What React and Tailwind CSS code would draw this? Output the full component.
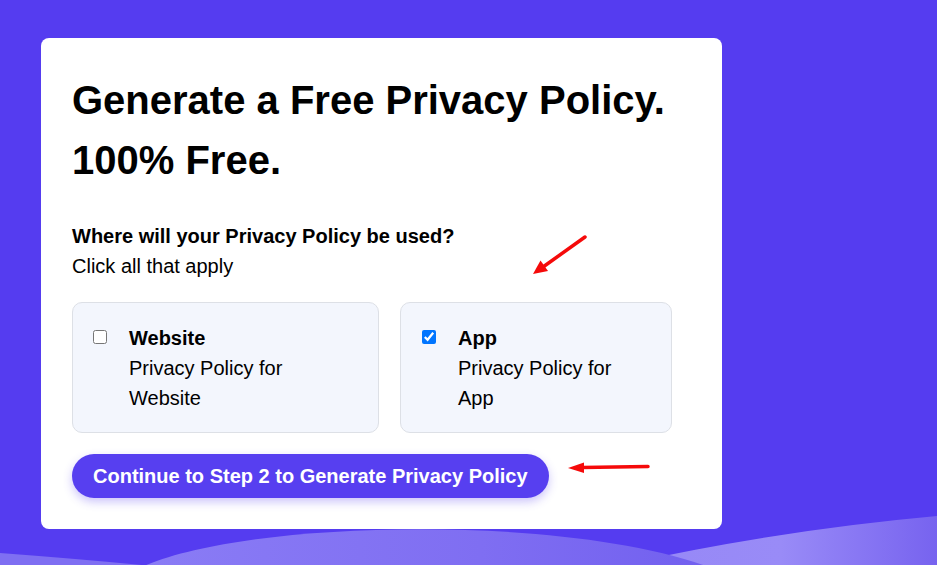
import React from "react";

function Waves() {
  return (
    <svg
      className="absolute left-0 top-0 pointer-events-none"
      width="937"
      height="565"
      viewBox="0 0 937 565"
    >
      <defs>
        <linearGradient id="rw" x1="0" y1="0" x2="1" y2="0">
          <stop offset="0%" stopColor="#9587f6" />
          <stop offset="55%" stopColor="#998bf7" />
          <stop offset="100%" stopColor="#7763ef" />
        </linearGradient>
        <linearGradient id="hump" x1="0" y1="0" x2="1" y2="0">
          <stop offset="0%" stopColor="#8a7cf5" />
          <stop offset="60%" stopColor="#7f6ef2" />
          <stop offset="100%" stopColor="#7260ef" />
        </linearGradient>
      </defs>
      <path d="M0,553 Q80,559 152,566 L0,566 Z" fill="#7f6ff2" />
      <path d="M590,572 Q760,532 937,516 L937,566 L590,566 Z" fill="url(#rw)" />
      <path d="M144,566 C250,520 560,514 706,566 Z" fill="url(#hump)" />
    </svg>
  );
}

function Arrows() {
  return (
    <svg
      className="absolute left-0 top-0 pointer-events-none"
      width="937"
      height="565"
      viewBox="0 0 937 565"
    >
      <line x1="585" y1="237" x2="543" y2="267" stroke="#f50a0a" strokeWidth="3.5" strokeLinecap="round" />
      <polygon points="533,274 540.5,260.5 548,271" fill="#f50a0a" />
      <line x1="648" y1="466.5" x2="582" y2="467.5" stroke="#f50a0a" strokeWidth="3.5" strokeLinecap="round" />
      <polygon points="568,468 584,462.5 584,473" fill="#f50a0a" />
    </svg>
  );
}

function OptionCard({ width, pad, title, line1, line2, checked }) {
  return (
    <div
      className={`${width} ${pad} h-[131px] rounded-[10px] border border-[#dde0e6] bg-[#f3f6fd] pt-[20px] flex gap-[22px]`}
    >
      <input
        type="checkbox"
        defaultChecked={checked}
        className="mt-[7px] w-[14px] h-[14px] shrink-0 accent-[#0075ff]"
      />
      <div className="text-[20px] leading-[30px] text-black">
        <div className="font-bold">{title}</div>
        <div>{line1}</div>
        <div>{line2}</div>
      </div>
    </div>
  );
}

export default function App() {
  return (
    <div className="relative h-[565px] w-full overflow-hidden bg-[#553cf0] font-['Liberation_Sans',Arial,sans-serif]">
      <Waves />
      <div className="relative pt-[38px] pl-[41px]">
        <div className="w-[681px] rounded-[8px] bg-white px-[31px] pt-[32px] pb-[31px] text-black">
          <h1 className="text-[40px] font-bold leading-[60px]">
            Generate a Free Privacy Policy.
            <br />
            100% Free.
          </h1>
          <div className="mt-[31px] text-[20px] leading-[30px]">
            <div className="font-bold">Where will your Privacy Policy be used?</div>
            <div>Click all that apply</div>
          </div>
          <div className="mt-[21px] flex gap-[21px]">
            <OptionCard
              width="w-[307px]"
              pad="pl-[20px]"
              title="Website"
              line1="Privacy Policy for"
              line2="Website"
              checked={false}
            />
            <OptionCard
              width="w-[272px]"
              pad="pl-[21px]"
              title="App"
              line1="Privacy Policy for"
              line2="App"
              checked={true}
            />
          </div>
          <button className="mt-[21px] flex h-[44px] items-center rounded-full bg-[#573ff0] px-[21px] text-[20px] font-bold text-white shadow-[0_4px_10px_rgba(87,63,240,0.3)]">
            Continue to Step 2 to Generate Privacy Policy
          </button>
        </div>
      </div>
      <Arrows />
    </div>
  );
}
